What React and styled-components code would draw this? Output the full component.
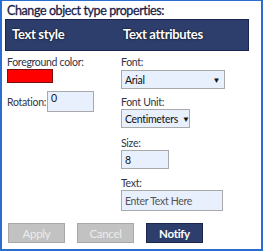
import styled, { createGlobalStyle } from "styled-components";

const Global = createGlobalStyle`
  html, body { margin: 0; padding: 0; background: #ffffff; }
  body { font-family: Lato, "Open Sans", sans-serif; }
  * { box-sizing: border-box; }
`;

const Panel = styled.div`
  width: 263px;
  height: 251px;
  border: 2px solid #2b6dd0;
  border-top-width: 1px;
  padding: 3px 12px 0 3px;
  background: #fff;
`;

const Title = styled.div`
  font-size: 12.5px;
  color: #1a2048;
  line-height: 14px;
  margin-left: 2px;
  letter-spacing: -0.4px;
  -webkit-text-stroke: 0.3px #1a2048;
`;

const Header = styled.div`
  display: flex;
  margin-top: 1px;
  height: 32px;
  background: #2d3e6c;
  border: 1px solid #1a2550;
  align-items: center;
  padding-left: 6px;
  padding-bottom: 2px;
`;

const HeadCell = styled.div`
  width: ${(p) => p.w}px;
  color: #fff;
  font-weight: 700;
  font-size: 13px;
  letter-spacing: -0.3px;
  text-shadow: 0 0 2px #000;
`;

const Body = styled.div`
  display: flex;
  padding-top: 5px;
`;

const Column = styled.div`
  display: flex;
  flex-direction: column;
  width: ${(p) => p.w}px;
  margin-left: 2px;
`;

const Label = styled.div`
  font-size: 10.5px;
  color: #2f3548;
  line-height: 12px;
  letter-spacing: -0.3px;
`;

const Field = styled.div`
  margin-top: ${(p) => p.mt || 0}px;
  display: flex;
  flex-direction: column;
`;

const Row = styled.div`
  display: flex;
  align-items: center;
  margin-top: ${(p) => p.mt || 0}px;
  gap: 1px;
`;

const Swatch = styled.div`
  width: 46px;
  height: 14px;
  background: #ff0000;
  border: 1px solid #7a1010;
  margin-top: 1px;
`;

const Input = styled.div`
  width: ${(p) => p.w}px;
  height: ${(p) => p.h || 19}px;
  margin-top: ${(p) => p.mt || 0}px;
  background: #e8f0fe;
  border: 1px solid #a9a9a9;
  font-size: 10.5px;
  letter-spacing: -0.3px;
  color: ${(p) => (p.placeholder ? "#555" : "#111")};
  padding: 0 3px;
  display: flex;
  align-items: ${(p) => (p.top ? "flex-start" : "center")};
  justify-content: space-between;
  white-space: nowrap;
`;

const Arrow = styled.span`
  font-size: 8px;
  color: #111;
  margin-right: 1px;
  margin-left: 4px;
`;

const Buttons = styled.div`
  display: flex;
  gap: 12px;
  margin-top: 12px;
  margin-left: 3px;
`;

const Button = styled.div`
  width: 57px;
  height: 20px;
  display: flex;
  align-items: center;
  justify-content: center;
  font-size: 11.5px;
  letter-spacing: -0.3px;
  background: ${(p) => (p.primary ? "#2d3e6c" : "#c2c2c2")};
  border: 1px solid ${(p) => (p.primary ? "#1a2550" : "#a8a8a8")};
  color: ${(p) => (p.primary ? "#fff" : "#ececec")};
  font-weight: ${(p) => (p.primary ? 700 : 400)};
`;

export default function App() {
  return (
    <>
      <Global />
      <Panel>
        <Title>Change object type properties:</Title>
        <Header>
          <HeadCell w={111}>Text style</HeadCell>
          <HeadCell w={120}>Text attributes</HeadCell>
        </Header>
        <Body>
          <Column w={112}>
            <Field>
              <Label>Foreground color:</Label>
              <Swatch />
            </Field>
            <Row mt={8}>
              <Label>Rotation:</Label>
              <Input w={47} h={21} top>0</Input>
            </Row>
          </Column>
          <Column w={120}>
            <Field>
              <Label>Font:</Label>
              <Input w={104} h={19} mt={2}>
                Arial <Arrow>▼</Arrow>
              </Input>
            </Field>
            <Field mt={7}>
              <Label>Font Unit:</Label>
              <Input w={69} h={19} mt={1}>
                Centimeters<Arrow>▼</Arrow>
              </Input>
            </Field>
            <Field mt={9}>
              <Label>Size:</Label>
              <Input w={48} h={19} mt={1}>8</Input>
            </Field>
            <Field mt={8}>
              <Label>Text:</Label>
              <Input w={102} h={21} mt={1} placeholder>
                Enter Text Here
              </Input>
            </Field>
          </Column>
        </Body>
        <Buttons>
          <Button>Apply</Button>
          <Button>Cancel</Button>
          <Button primary>Notify</Button>
        </Buttons>
      </Panel>
    </>
  );
}
